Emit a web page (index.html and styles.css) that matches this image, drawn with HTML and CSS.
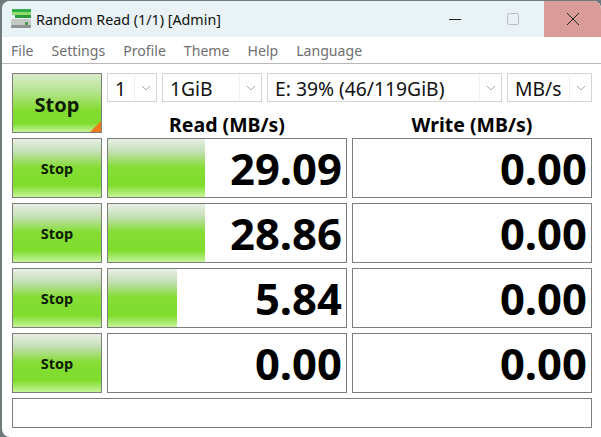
FILE: index.html
```html
<!DOCTYPE html>
<html>
<head>
  <link rel="stylesheet" href="styles.css">
</head>
<body>
  <div class="window">
    <div class="titlebar">
      <svg class="app-icon" width="21" height="20" viewBox="0 0 21 20">
        <rect x="1" y="0" width="19" height="3" fill="#2fb04a"/>
        <rect x="1" y="3" width="19" height="3" fill="#8fdc6a"/>
        <rect x="4" y="6" width="16" height="3" fill="#2e9a3e"/>
        <rect x="0" y="10" width="20" height="9" rx="2" fill="#c4c9c6"/>
        <rect x="0" y="16" width="20" height="3" rx="1" fill="#8d9491"/>
        <rect x="14" y="13" width="3" height="3" fill="#4f9a55"/>
      </svg>
      <span class="title">Random Read (1/1) [Admin]</span>
      <div class="controls">
        <div class="control minimize">
          <svg width="12" height="12" viewBox="0 0 12 12"><path d="M0 6.5H12" stroke="#222" fill="none"/></svg>
        </div>
        <div class="control maximize">
          <svg width="12" height="12" viewBox="0 0 12 12"><rect x="0.5" y="0.5" width="11" height="11" rx="2" stroke="#b4bcc0" fill="none"/></svg>
        </div>
        <div class="control close">
          <svg width="14" height="14" viewBox="0 0 14 14"><path d="M1 1L13 13M13 1L1 13" stroke="#222" fill="none"/></svg>
        </div>
      </div>
    </div>

    <div class="menubar">
      <span>File</span>
      <span>Settings</span>
      <span>Profile</span>
      <span>Theme</span>
      <span>Help</span>
      <span>Language</span>
    </div>

    <div class="main">
      <div class="grid">
        <div class="btn btn-all"><span>Stop</span><i class="corner"></i></div>

        <div class="top-cell">
          <div class="selects">
            <div class="select sel-count"><span class="val">1</span><span class="arrow"><svg width="10" height="6" viewBox="0 0 10 6"><path d="M1 1L5 5L9 1" stroke="#a8a8a8" fill="none"/></svg></span></div>
            <div class="select sel-size"><span class="val">1GiB</span><span class="arrow"><svg width="10" height="6" viewBox="0 0 10 6"><path d="M1 1L5 5L9 1" stroke="#a8a8a8" fill="none"/></svg></span></div>
            <div class="select sel-drive"><span class="val">E: 39% (46/119GiB)</span><span class="arrow"><svg width="10" height="6" viewBox="0 0 10 6"><path d="M1 1L5 5L9 1" stroke="#a8a8a8" fill="none"/></svg></span></div>
            <div class="select sel-unit"><span class="val">MB/s</span><span class="arrow"><svg width="10" height="6" viewBox="0 0 10 6"><path d="M1 1L5 5L9 1" stroke="#a8a8a8" fill="none"/></svg></span></div>
          </div>
          <div class="heads">
            <div class="head">Read (MB/s)</div>
            <div class="head">Write (MB/s)</div>
          </div>
        </div>

        <div class="btn">Stop</div>
        <div class="meter"><div class="fill" style="width: 97px"></div><span>29.09</span></div>
        <div class="meter"><span>0.00</span></div>

        <div class="btn">Stop</div>
        <div class="meter"><div class="fill" style="width: 97px"></div><span>28.86</span></div>
        <div class="meter"><span>0.00</span></div>

        <div class="btn">Stop</div>
        <div class="meter"><div class="fill" style="width: 69px"></div><span>5.84</span></div>
        <div class="meter"><span>0.00</span></div>

        <div class="btn">Stop</div>
        <div class="meter"><span>0.00</span></div>
        <div class="meter"><span>0.00</span></div>

        <div class="status"></div>
      </div>
    </div>
  </div>
</body>
</html>
```

FILE: styles.css
```css
html, body {
  margin: 0;
  height: 100%;
}

body {
  background: #6f7a7c;
  overflow: hidden;
  font-family: "Noto Sans", "Open Sans", sans-serif;
  color: #000;
}

.window {
  height: 436px;
  margin: 1px 0 0 2px;
  background: #fff;
  border-radius: 8px 8px 0 8px;
  overflow: hidden;
  display: flex;
  flex-direction: column;
}

.titlebar {
  height: 36px;
  flex: none;
  background: #e9f2f5;
  display: flex;
  align-items: center;
}

.app-icon {
  margin: 0 4px 0 9px;
}

.title {
  font-size: 14.3px;
  color: #111;
  white-space: nowrap;
}

.controls {
  margin-left: auto;
  display: flex;
  align-self: stretch;
}

.control {
  display: flex;
  align-items: center;
  justify-content: center;
}

.minimize { width: 54px; }
.maximize { width: 62px; }
.close {
  width: 57px;
  background: #d99c99;
}

.menubar {
  height: 27px;
  flex: none;
  box-sizing: border-box;
  border-bottom: 1px solid #b9b9b9;
  padding: 0 0 0 9px;
  display: flex;
  align-items: center;
  gap: 18px;
  font-size: 14.1px;
  color: #6f6f6f;
}

.main {
  padding: 9px 9px 0 10px;
}

.grid {
  display: grid;
  grid-template-columns: 90px 240px 240px;
  grid-template-rows: 60px 60px 60px 60px 60px 30px;
  gap: 5px;
}

.btn {
  position: relative;
  box-sizing: border-box;
  border: 1px solid #7d7d7d;
  background: linear-gradient(#e9efe6 0%, #c3dfb4 22%, #86dd36 48%, #7fdc2c 80%, #c6f59a 100%);
  display: flex;
  align-items: center;
  justify-content: center;
  font-size: 14.5px;
  font-weight: 700;
  color: #0c1c04;
}

.btn-all {
  background: linear-gradient(#d9ecca 0%, #b5e490 30%, #84dc32 62%, #7fdc2c 85%, #c6f59a 100%);
  font-size: 20px;
}

.btn-all span {
  margin-top: 2px;
}

.corner {
  position: absolute;
  right: 0;
  bottom: 0;
  width: 0;
  height: 0;
  border-left: 11px solid transparent;
  border-bottom: 11px solid #ee7a1c;
}

.top-cell {
  grid-column: 2 / 4;
  display: flex;
  flex-direction: column;
}

.selects {
  display: flex;
  gap: 5px;
  height: 29px;
}

.select {
  box-sizing: border-box;
  border: 1px solid #d4d4d4;
  display: flex;
  align-items: center;
  font-size: 19.3px;
  color: #111;
  background: #fff;
}

.sel-count { width: 50px; }
.sel-size { width: 100px; }
.sel-drive { width: 235px; }
.sel-unit { width: 85px; }

.val {
  flex: 1;
  padding-left: 7px;
  padding-top: 2px;
  white-space: nowrap;
}

.arrow {
  width: 22px;
  align-self: stretch;
  box-sizing: border-box;
  border-left: 1px solid #f0f0f0;
  display: flex;
  align-items: center;
  justify-content: center;
}

.heads {
  display: flex;
  gap: 5px;
  flex: 1;
  padding-top: 7px;
}

.head {
  width: 240px;
  text-align: center;
  font-size: 19.5px;
  font-weight: 700;
  line-height: 31px;
}

.meter {
  position: relative;
  box-sizing: border-box;
  border: 1px solid #7d7d7d;
  background: #fff;
  padding-right: 4px;
  display: flex;
  align-items: center;
  justify-content: flex-end;
  font-size: 43.6px;
  font-weight: 700;
}

.meter span {
  position: relative;
}

.fill {
  position: absolute;
  left: 0;
  top: 0;
  bottom: 0;
  background: linear-gradient(#e9efe6 0%, #c3dfb4 22%, #86dd36 48%, #7fdc2c 80%, #c6f59a 100%);
}

.status {
  grid-column: 1 / 4;
  border: 1px solid #7d7d7d;
}
```
